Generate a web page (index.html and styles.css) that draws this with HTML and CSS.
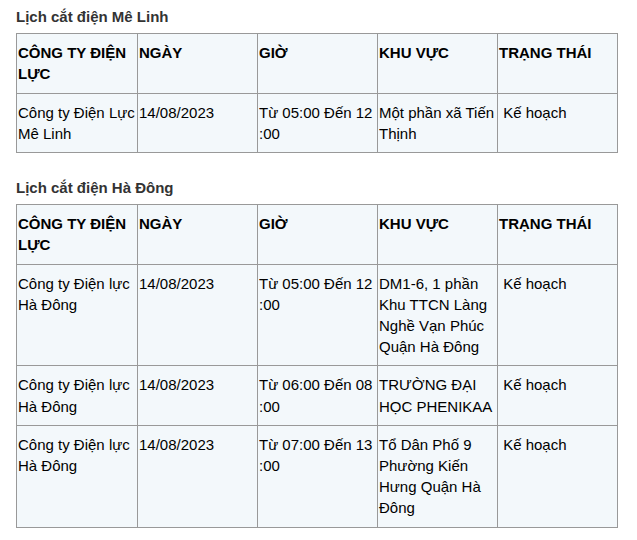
FILE: index.html
```html
<!DOCTYPE html>
<html lang="vi">
<head>
<meta charset="utf-8">
<link rel="stylesheet" href="styles.css">
</head>
<body>
<div class="page">
  <h3 class="title">Lịch cắt điện Mê Linh</h3>
  <table class="sched">
    <colgroup><col class="c1"><col class="c"><col class="c"><col class="c"><col class="c"></colgroup>
    <thead>
      <tr><th>CÔNG TY ĐIỆN LỰC</th><th>NGÀY</th><th>GIỜ</th><th>KHU VỰC</th><th>TRẠNG THÁI</th></tr>
    </thead>
    <tbody>
      <tr><td>Công ty Điện Lực Mê Linh</td><td>14/08/2023</td><td>Từ 05:00 Đến 12<wbr>:00</td><td>Một phần xã Tiến Thịnh</td><td>&nbsp;Kế hoạch</td></tr>
    </tbody>
  </table>

  <h3 class="title">Lịch cắt điện Hà Đông</h3>
  <table class="sched">
    <colgroup><col class="c1"><col class="c"><col class="c"><col class="c"><col class="c"></colgroup>
    <thead>
      <tr><th>CÔNG TY ĐIỆN LỰC</th><th>NGÀY</th><th>GIỜ</th><th>KHU VỰC</th><th>TRẠNG THÁI</th></tr>
    </thead>
    <tbody>
      <tr><td>Công ty Điện lực Hà Đông</td><td>14/08/2023</td><td>Từ 05:00 Đến 12<wbr>:00</td><td>DM1-6, 1 phần Khu TTCN Làng Nghề Vạn Phúc Quận Hà Đông</td><td>&nbsp;Kế hoạch</td></tr>
      <tr><td>Công ty Điện lực Hà Đông</td><td>14/08/2023</td><td>Từ 06:00 Đến 08<wbr>:00</td><td>TRƯỜNG ĐẠI HỌC PHENIKAA</td><td>&nbsp;Kế hoạch</td></tr>
      <tr><td>Công ty Điện lực Hà Đông</td><td>14/08/2023</td><td>Từ 07:00 Đến 13<wbr>:00</td><td>Tổ Dân Phố 9 Phường Kiến Hưng Quận Hà Đông</td><td>&nbsp;Kế hoạch</td></tr>
    </tbody>
  </table>
</div>
</body>
</html>
```

FILE: styles.css
```css
html, body {
  margin: 0;
  padding: 0;
  background: #ffffff;
}

.page {
  padding: 6px 0 0 16px;
  font-family: "Liberation Sans", Arial, sans-serif;
  font-size: 15px;
  line-height: 21.2px;
  color: #000;
}

.title {
  margin: 0 0 6px 0;
  font-size: 15px;
  line-height: 21.2px;
  font-weight: bold;
  color: #333;
}

.sched {
  width: 602px;
  table-layout: fixed;
  border-collapse: collapse;
  margin: 0 0 24px 0;
}

.sched .c1 { width: 121px; }
.sched .c { width: 120px; }

.sched th,
.sched td {
  border: 1px solid #999;
  background: #f3f8fb;
  padding: 8px 1px 8px 1px;
  vertical-align: top;
  text-align: left;
  font-size: 15px;
  line-height: 21.2px;
  color: #000;
}

.sched th {
  font-weight: bold;
}
```
